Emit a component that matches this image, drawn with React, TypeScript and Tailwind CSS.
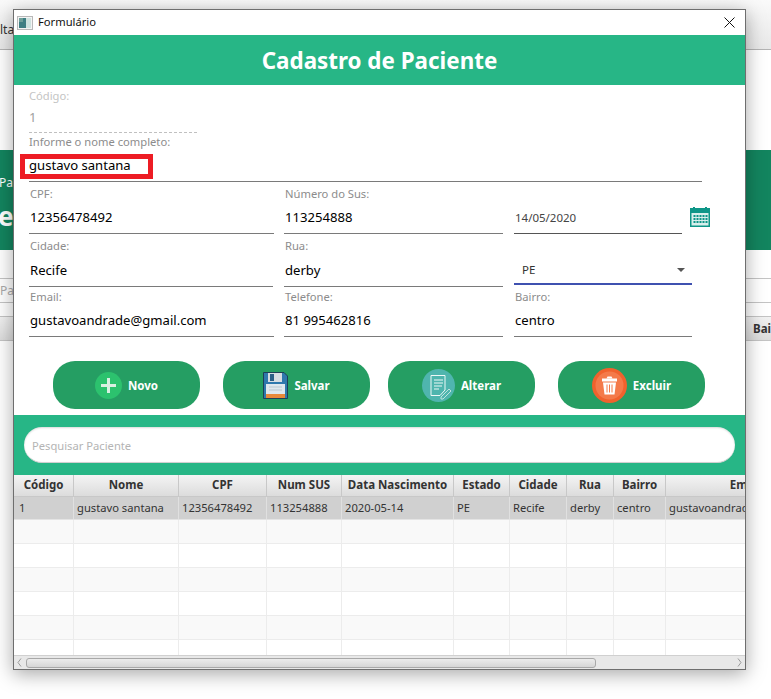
const FONT = "font-['Noto_Sans','Open_Sans',sans-serif]";

const COLUMNS = [
  { title: 'Código', width: 'w-[60px]', value: '1' },
  { title: 'Nome', width: 'w-[105px]', value: 'gustavo santana' },
  { title: 'CPF', width: 'w-[88px]', value: '12356478492' },
  { title: 'Num SUS', width: 'w-[75px]', value: '113254888' },
  { title: 'Data Nascimento', width: 'w-[112px]', value: '2020-05-14' },
  { title: 'Estado', width: 'w-[56px]', value: 'PE' },
  { title: 'Cidade', width: 'w-[57px]', value: 'Recife' },
  { title: 'Rua', width: 'w-[47px]', value: 'derby' },
  { title: 'Bairro', width: 'w-[52px]', value: 'centro' },
  { title: 'Email', width: 'w-[160px]', value: 'gustavoandrade@gmail.com' },
];

/* ─── Icons ─────────────────────────────────────────────────────────── */
function WindowIcon() {
  return (
    <svg width="16" height="14" viewBox="0 0 16 14" className="shrink-0">
      <rect x="0.5" y="0.5" width="15" height="13" fill="#f4f4f4" stroke="#b8b8b8" />
      <rect x="2" y="2" width="7" height="10" fill="#3f7f83" />
      <rect x="9" y="2" width="5" height="10" fill="#cfe3e0" />
      <rect x="2" y="2" width="4" height="4" fill="#6d9f9a" />
    </svg>
  );
}

function CloseIcon() {
  return (
    <svg width="11" height="11" viewBox="0 0 11 11" className="shrink-0">
      <path d="M0.5 0.5L10.5 10.5M10.5 0.5L0.5 10.5" stroke="#111" strokeWidth="1" />
    </svg>
  );
}

function CalendarIcon() {
  return (
    <svg width="20" height="20" viewBox="0 0 20 20" className="shrink-0">
      <path d="M0 1H3V0H5V1H15V0H17V1H20V20H0Z" fill="#0e9688" />
      <rect x="1.5" y="6" width="17" height="12.5" fill="#d9efec" />
      {[8, 11, 14].map((y) =>
        [3.5, 6.5, 9.5, 12.5, 15.5].map((x) => (
          <rect key={`${x}-${y}`} x={x} y={y} width="2" height="2" fill="#0e9688" />
        )),
      )}
    </svg>
  );
}

function PlusIcon() {
  return (
    <svg width="27" height="27" viewBox="0 0 27 27" className="shrink-0">
      <circle cx="13.5" cy="13.5" r="13.5" fill="#2cc26e" />
      <path d="M13.5 6V21M6 13.5H21" stroke="#d9f0e2" strokeWidth="3" />
    </svg>
  );
}

function FloppyIcon() {
  return (
    <svg width="25" height="27" viewBox="0 0 25 27" className="shrink-0">
      <path d="M0.5 0.5H21L24.5 4V26.5H0.5Z" fill="#2f78ad" stroke="#1d3f57" />
      <rect x="5" y="1" width="14" height="9" fill="#d7dde2" />
      <rect x="7" y="2" width="4" height="7" fill="#2b5f86" />
      <rect x="3" y="12" width="19" height="14" fill="#dfe8ee" />
      <rect x="3" y="22" width="19" height="4" fill="#e8893a" />
      <path d="M6 15H19M6 18H19" stroke="#b9c7d0" />
    </svg>
  );
}

function NoteIcon() {
  return (
    <svg width="33" height="33" viewBox="0 0 33 33" className="shrink-0">
      <circle cx="16.5" cy="16.5" r="16.5" fill="#4fb5ae" />
      <path
        d="M9 6.5H23V21L18 26.5H9Z"
        fill="none"
        stroke="#eef8f7"
        strokeWidth="1"
        strokeLinejoin="round"
      />
      <path d="M12 11H21M12 14H21M12 17H20M12 20H17" stroke="#eef8f7" strokeWidth="1" />
      <path d="M19 28L27 20L29 22L21 30H19Z" fill="none" stroke="#bfe3df" strokeWidth="1" />
    </svg>
  );
}

function TrashIcon() {
  return (
    <svg width="35" height="35" viewBox="0 0 35 35" className="shrink-0">
      <circle cx="17.5" cy="17.5" r="17.5" fill="#f0622d" />
      <circle cx="17.5" cy="17.5" r="14" fill="#f47a4a" />
      <path d="M10 10.5H25V13.5H10Z" fill="#fff" />
      <path d="M14.5 10.5L15.5 8.5H19.5L20.5 10.5Z" fill="#fff" />
      <path d="M11 14.5H24L22.5 26.5H12.5Z" fill="#fff" />
      <path d="M15 16.5V24.5M17.5 16.5V24.5M20 16.5V24.5" stroke="#f47a4a" strokeWidth="1" />
    </svg>
  );
}

/* ─── Form pieces ───────────────────────────────────────────────────── */
function Field({
  label,
  value,
  className,
  valueClass = 'leading-[29px]',
}: {
  label: string;
  value: string;
  className: string;
  valueClass?: string;
}) {
  return (
    <div className={`flex flex-col border-b border-[#7a7a7a] ${className}`}>
      <span className="h-[17px] pl-px text-[11.2px] leading-[15px] text-[#8c8c8c]">{label}</span>
      <span className={`pl-px text-[13.1px] text-black ${valueClass}`}>{value}</span>
    </div>
  );
}

function ActionButton({
  icon,
  label,
  className,
}: {
  icon: React.ReactNode;
  label: string;
  className: string;
}) {
  return (
    <button
      className={`flex h-[48px] w-[147px] items-center justify-center gap-[6px] rounded-[22px] bg-[#259e63] text-[11.5px] font-bold text-white ${className}`}
    >
      {icon}
      <span className="mt-[2px]">{label}</span>
    </button>
  );
}

/* ─── Table ─────────────────────────────────────────────────────────── */
function PatientTable() {
  const stripes = ['bg-[#f9f9f9]', 'bg-white', 'bg-[#f9f9f9]', 'bg-white', 'bg-[#f9f9f9]', 'bg-white'];
  return (
    <div className="min-h-0 flex-1 overflow-hidden">
      <div className="flex h-[22px] w-[822px]">
        {COLUMNS.map((col) => (
          <div
            key={col.title}
            className={`${col.width} flex shrink-0 items-center justify-center border-r border-b border-[#c8c8c8] bg-gradient-to-b from-[#f4f4f4] to-[#dcdcdc] pb-[2px] text-[11.5px] font-bold text-[#333]`}
          >
            {col.title}
          </div>
        ))}
      </div>
      <div className="flex h-[23px] w-[822px] border-b border-[#e4e4e4] bg-[#d0d0d0]">
        {COLUMNS.map((col, i) => (
          <div
            key={col.title}
            className={`${col.width} ${i === 0 ? 'pl-[5px]' : 'pl-[3px]'} shrink-0 truncate border-r border-[#e0e0e0] text-[11.2px] leading-[22px] text-[#333]`}
          >
            {col.value}
          </div>
        ))}
      </div>
      {stripes.map((stripe, i) => (
        <div key={i} className={`flex h-[24px] w-[822px] border-b border-[#ececec] ${stripe}`}>
          {COLUMNS.map((col) => (
            <div key={col.title} className={`${col.width} shrink-0 border-r border-[#ececec]`} />
          ))}
        </div>
      ))}
    </div>
  );
}

function ScrollBar() {
  return (
    <div className="flex h-[14px] shrink-0 items-center gap-[4px] border-t border-[#d0d0d0] bg-[#e8e8e8] px-[3px]">
      <svg width="5" height="9" viewBox="0 0 5 9" className="shrink-0">
        <path d="M4 0.5L1 4.5L4 8.5" fill="none" stroke="#9a9a9a" />
      </svg>
      <div className="h-[10px] w-[570px] rounded-[3px] border border-[#a8a8a8] bg-gradient-to-b from-[#ececec] to-[#d6d6d6]" />
      <div className="flex-1" />
      <svg width="5" height="9" viewBox="0 0 5 9" className="shrink-0">
        <path d="M1 0.5L4 4.5L1 8.5" fill="none" stroke="#9a9a9a" />
      </svg>
    </div>
  );
}

/* ─── Window behind the dialog ──────────────────────────────────────── */
function Backdrop() {
  return (
    <div className="flex h-[699px] w-[771px] flex-col overflow-hidden bg-white">
      <div className="h-[50px] shrink-0 border-b border-[#b4b4b4] bg-gradient-to-b from-[#fafafa] to-[#e8e8e8] pt-[21px] text-[12px] leading-[18px] text-[#333]">
        lta
      </div>
      <div className="mt-[100px] flex h-[100px] shrink-0 flex-col bg-[#13855f] pt-[24px] text-white">
        <span className="-ml-[1px] text-[12px] leading-[18px]">Pac</span>
        <span className="mt-[8px] -ml-[2px] text-[26px] leading-[32px] font-bold">e</span>
      </div>
      <div className="mt-[28px] flex h-[25px] shrink-0 items-center border-y border-[#c4c4c4] text-[12px] text-[#aaa]">
        Pa
      </div>
      <div className="mt-[13px] flex h-[25px] shrink-0 items-center justify-end border-y border-[#c4c4c4] bg-gradient-to-b from-[#f2f2f2] to-[#dcdcdc] text-[11.5px] font-bold text-[#333]">
        <span className="w-[18px] overflow-hidden">Bai</span>
      </div>
    </div>
  );
}

/* ─── Page ──────────────────────────────────────────────────────────── */
export default function App() {
  return (
    <div className={`relative h-[699px] w-[771px] overflow-hidden ${FONT}`}>
      <Backdrop />

      {/* dialog floats over the main window */}
      <div className="absolute top-[9px] left-[13px] flex h-[661px] w-[733px] flex-col overflow-hidden border border-[#6e6e6e] bg-white shadow-[0_4px_18px_rgba(0,0,0,0.35)]">
        <div className="flex h-[25px] shrink-0 items-center pr-[10px] pl-[3px]">
          <WindowIcon />
          <span className="mb-px ml-[5px] flex-1 text-[11.2px] text-[#111]">Formulário</span>
          <CloseIcon />
        </div>

        <div className="flex h-[50px] shrink-0 items-center justify-center bg-[#27b686] pt-[2px] text-[22.4px] font-bold text-white">
          Cadastro de Paciente
        </div>

        <div className="flex shrink-0 flex-col pl-[15px]">
          <div className="mt-[2px] flex h-[46px] w-[168px] flex-col border-b border-dashed border-[#c0c0c0]">
            <span className="h-[17px] text-[11.2px] leading-[17px] text-[#c4c4c4]">Código:</span>
            <span className="text-[13.1px] leading-[26px] text-[#a0a0a0]">1</span>
          </div>

          <div className="relative flex h-[49px] w-[673px] flex-col border-b border-[#7a7a7a]">
            <span className="h-[17px] text-[11.2px] leading-[17px] text-[#8c8c8c]">
              Informe o nome completo:
            </span>
            <span className="text-[13.1px] leading-[30px] text-black">gustavo santana</span>
            {/* annotation box drawn on top of the screenshot */}
            <span className="absolute top-[21px] -left-[9px] h-[25px] w-[133px] border-[5px] border-[#ed1c24]" />
          </div>

          <div className="mt-[4px] flex">
            <Field label="CPF:" value="12356478492" className="h-[48px] w-[245px]" />
            <Field label="Número do Sus:" value="113254888" className="ml-[10px] h-[48px] w-[219px]" />
            <div className="ml-[11px] flex h-[48px] w-[168px] items-end border-b border-[#555] pb-[5px] pl-px text-[11.5px] leading-[20px] text-[#444]">
              14/05/2020
            </div>
            <div className="mt-[21px] ml-[8px]">
              <CalendarIcon />
            </div>
          </div>

          <div className="mt-[4px] flex">
            <Field
              label="Cidade:"
              value="Recife"
              className="h-[49px] w-[244px]"
              valueClass="leading-[31px]"
            />
            <Field
              label="Rua:"
              value="derby"
              className="ml-[11px] h-[49px] w-[219px]"
              valueClass="leading-[31px]"
            />
            <div className="ml-[11px] flex h-[47px] w-[178px] items-end justify-between border-b-2 border-[#3f51b0] pr-[7px] pb-[2px] pl-[8px] text-[11.5px] leading-[22px] text-[#333]">
              PE
              <span className="mb-[9px] h-0 w-0 border-x-[4px] border-t-[4px] border-x-transparent border-t-[#555]" />
            </div>
          </div>

          <div className="mt-[2px] flex">
            <Field label="Email:" value="gustavoandrade@gmail.com" className="h-[48px] w-[245px]" />
            <Field label="Telefone:" value="81 995462816" className="ml-[10px] h-[48px] w-[219px]" />
            <Field label="Bairro:" value="centro" className="ml-[11px] h-[48px] w-[178px]" />
          </div>
        </div>

        <div className="mt-[24px] flex shrink-0 pl-[39px]">
          <ActionButton icon={<PlusIcon />} label="Novo" className="" />
          <ActionButton icon={<FloppyIcon />} label="Salvar" className="ml-[23px]" />
          <ActionButton icon={<NoteIcon />} label="Alterar" className="ml-[18px]" />
          <ActionButton icon={<TrashIcon />} label="Excluir" className="ml-[23px]" />
        </div>

        <div className="mt-[6px] flex h-[60px] shrink-0 items-center bg-[#27b686] px-[10px]">
          <div className="flex h-[36px] flex-1 items-center rounded-[18px] border-b border-[#d0d0d0] bg-white pt-[3px] pl-[8px] text-[11.2px] text-[#b4b4b4] shadow-[inset_0_1px_2px_rgba(0,0,0,0.15)]">
            Pesquisar Paciente
          </div>
        </div>

        <PatientTable />
        <ScrollBar />
      </div>
    </div>
  );
}
